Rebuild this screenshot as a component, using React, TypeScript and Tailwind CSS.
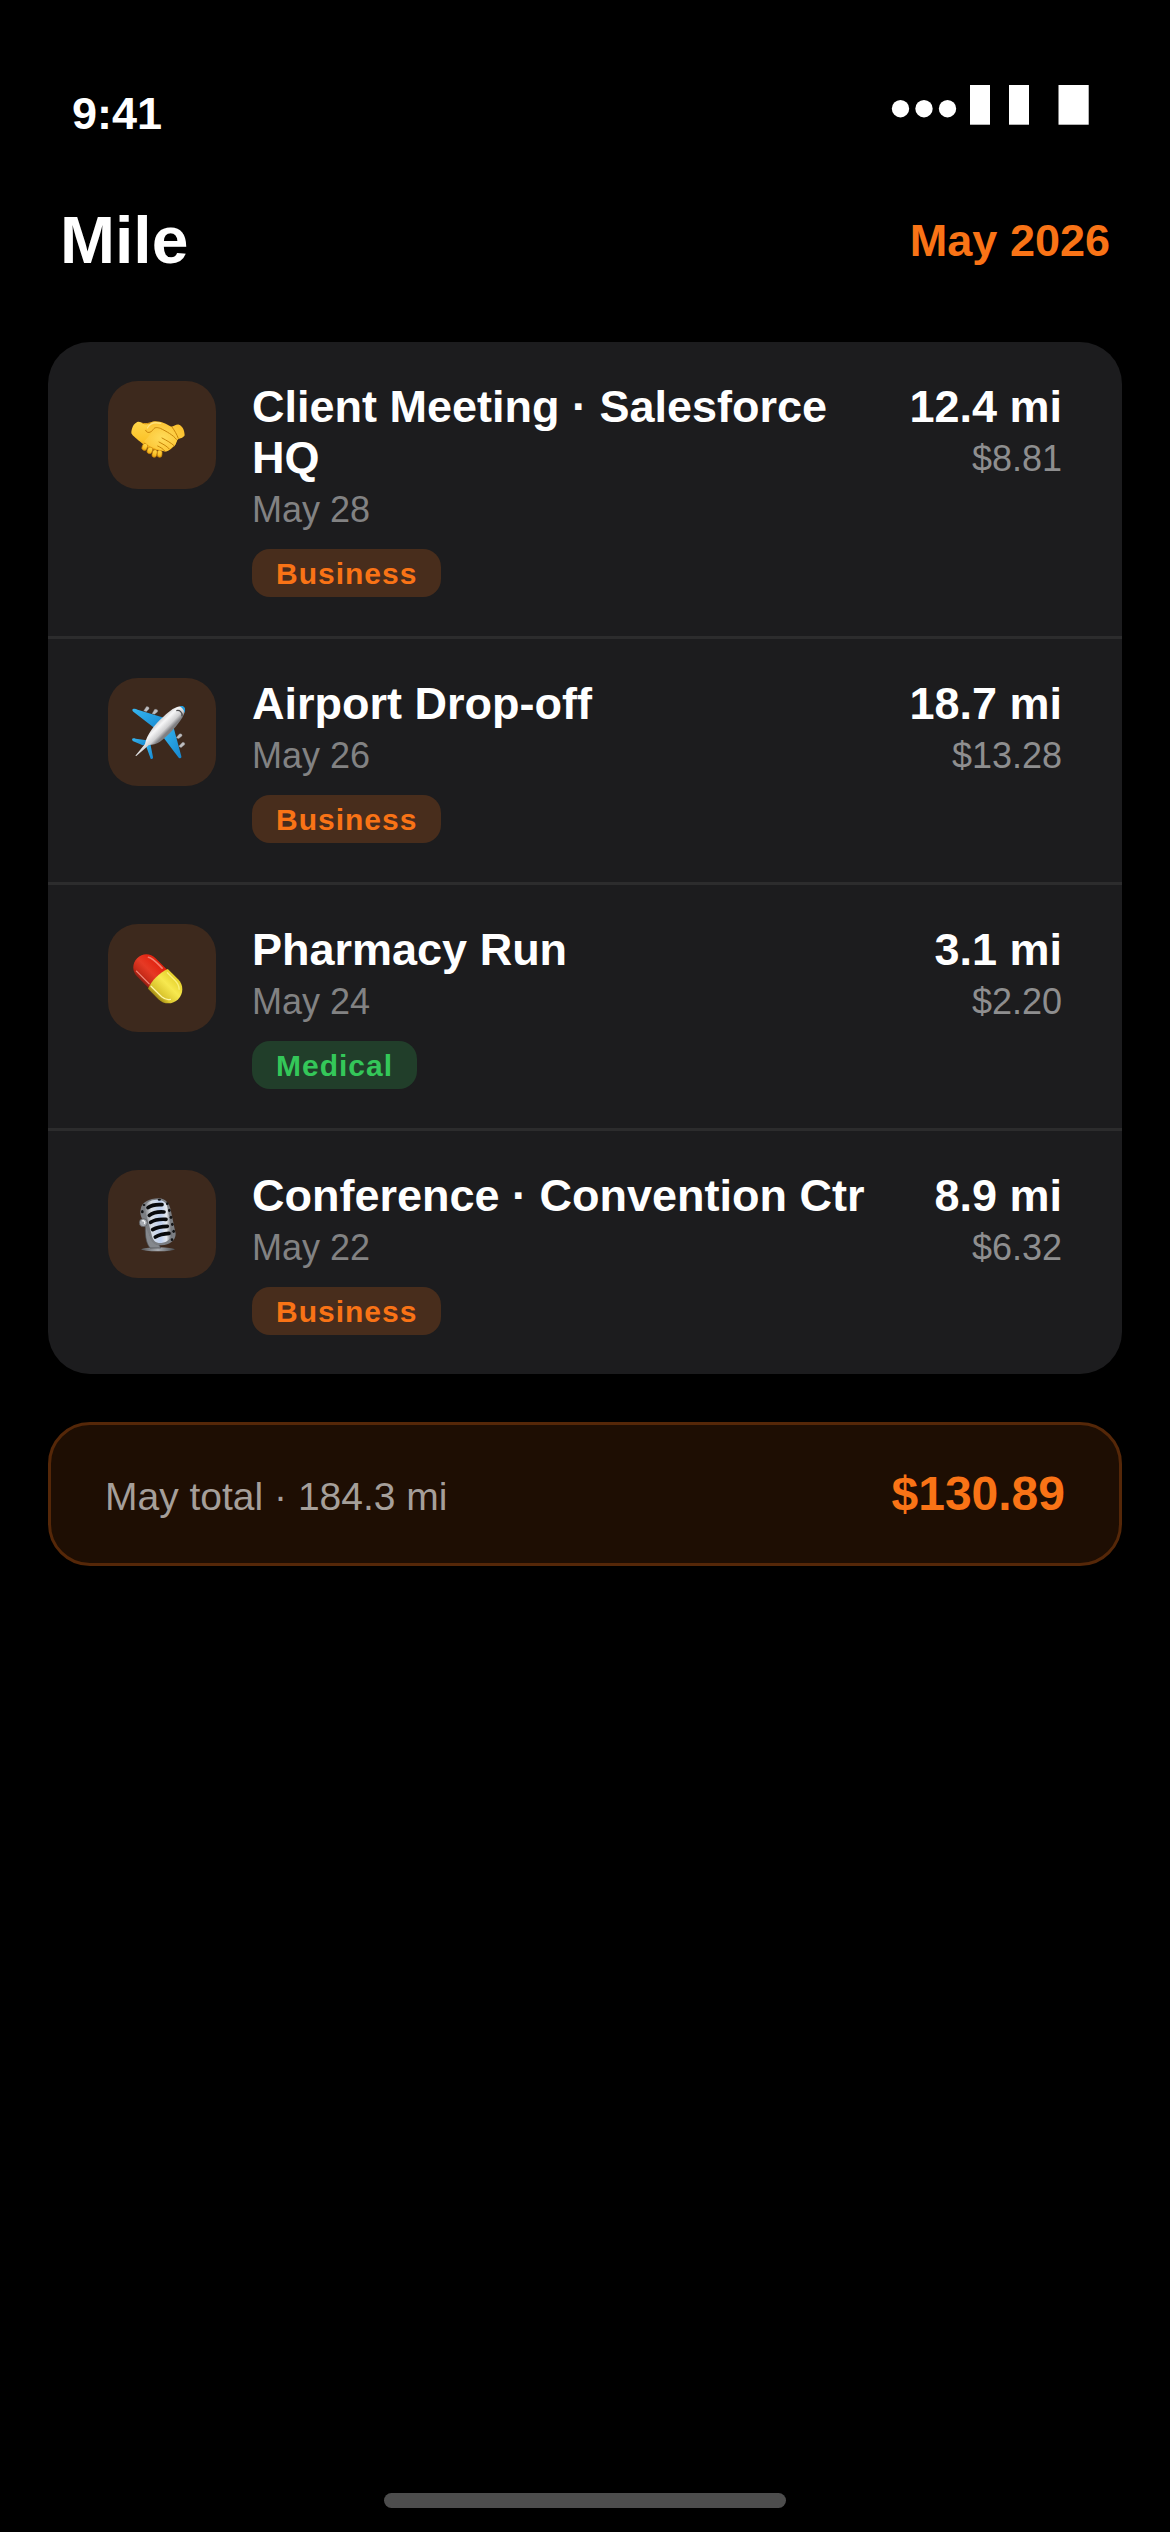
import React from "react";

function HandshakeIcon() {
    return (
        <svg viewBox="24 33 324 324" className="size-full" aria-hidden="true">
            <defs>
                <linearGradient id="hand" x1="0" y1="0" x2="0" y2="1">
                    <stop offset="0" stopColor="#ffd54a" />
                    <stop offset="0.6" stopColor="#fbc42b" />
                    <stop offset="1" stopColor="#e9a00f" />
                </linearGradient>
                <radialGradient id="palm" cx="0.45" cy="0.55" r="0.6">
                    <stop offset="0" stopColor="#ffdc5a" />
                    <stop offset="1" stopColor="#fbc02d" />
                </radialGradient>
            </defs>
            <path d="M94 190 C94 175 101 160 112 156 C120 154 126 160 128 159 C140 160 150 158 160 157 L212 172 L232 206 C230 222 214 240 198 244 L150 238 L126 220 C112 208 98 198 94 190Z" fill="url(#hand)" />
            <g fill="url(#hand)" stroke="#c98208" strokeWidth="2">
                <rect x="127" y="220" width="15" height="21" rx="7" transform="rotate(22 134 230)" />
                <rect x="142" y="231" width="15" height="20" rx="7" transform="rotate(22 149 241)" />
                <rect x="157" y="239" width="14" height="23" rx="7" transform="rotate(14 164 250)" />
                <rect x="172" y="240" width="14" height="22" rx="7" transform="rotate(4 179 251)" />
            </g>
            <path d="M136 182 C140 168 150 155 163 154 C184 153 198 162 214 170 C222 170 228 162 237 164 C247 168 254 180 254 196 C250 204 240 205 234 208 C228 214 230 222 224 227 C216 230 214 236 208 239 C200 246 190 246 184 241 C166 238 146 230 132 214 C142 206 148 194 156 186 C148 192 138 191 136 182Z" fill="url(#palm)" />
            <g fill="none" stroke="#c98609" strokeWidth="3" strokeLinecap="round">
                <path d="M128 160 C138 163 144 161 150 159" />
                <path d="M137 181 C140 191 153 189 160 178 C165 170 174 173 181 175 C199 184 221 196 229 208" />
                <path d="M186 204 C201 212 214 219 222 227" />
                <path d="M177 216 C190 223 202 229 208 237" />
                <path d="M173 228 C182 232 190 237 194 243" />
                <path d="M216 171 C224 182 231 194 235 205" />
            </g>
            <path d="M142 174 C150 159 166 156 182 160" fill="none" stroke="#ffe27a" strokeWidth="4" strokeLinecap="round" />
        </svg>
    );
}

function PlaneIcon() {
    return (
        <svg viewBox="24 24 324 324" className="size-full" aria-hidden="true">
            <defs>
                <linearGradient id="wing" x1="0" y1="0" x2="1" y2="1">
                    <stop offset="0" stopColor="#36b6f0" />
                    <stop offset="1" stopColor="#1687cf" />
                </linearGradient>
                <linearGradient id="fuselage" gradientUnits="userSpaceOnUse" x1="174" y1="150" x2="206" y2="182">
                    <stop offset="0" stopColor="#c9c9cb" />
                    <stop offset="0.35" stopColor="#f6f6f7" />
                    <stop offset="0.75" stopColor="#cfcfd1" />
                    <stop offset="1" stopColor="#7f7f82" />
                </linearGradient>
            </defs>
            <g fill="#bdbdbf" stroke="#77777a" strokeWidth="1">
                <path d="M131 122 L139 110 C145 109 149 113 147 117 L139 125Z" />
                <path d="M156 131 L164 118 C171 116 175 121 173 125 L164 133Z" />
                <path d="M228 203 L238 192 C244 189 248 194 246 198 L236 206Z" />
                <path d="M236 229 L246 218 C252 215 256 220 254 224 L243 233Z" />
            </g>
            <g fill="url(#wing)">
                <path d="M98 118 C102 115 108 117 113 119 L194 144 L166 176 L100 125 C97 122 96 120 98 118Z" />
                <path d="M221 173 L244 259 C245 264 241 267 236 263 L187 198Z" />
                <path d="M96 207 C98 204 103 205 107 206 L140 211 L140 224 L128 226 L98 213Z" />
                <path d="M139 230 L151 221 L159 261 C160 266 156 268 152 266Z" />
            </g>
            <path d="M106 257 L135 222 C141 192 163 164 190 140 C211 120 230 107 247 109 C257 113 257 126 248 141 C233 166 205 198 180 215 C169 222 158 224 147 225 L109 258Z" fill="url(#fuselage)" />
            <path d="M239 109 C250 105 259 113 254 129 C252 120 247 113 239 109Z" fill="#1b9ce0" />
            <path d="M229 122 C239 119 248 127 246 139" fill="none" stroke="#4c4c4f" strokeWidth="4" />
        </svg>
    );
}

function PillIcon() {
    return (
        <svg viewBox="24 27 324 324" className="size-full" aria-hidden="true">
            <defs>
                <linearGradient id="capRed" x1="0" y1="0" x2="0" y2="1">
                    <stop offset="0" stopColor="#e2200d" />
                    <stop offset="0.5" stopColor="#e63a25" />
                    <stop offset="0.85" stopColor="#c32917" />
                    <stop offset="1" stopColor="#8f1d12" />
                </linearGradient>
                <linearGradient id="capYellow" x1="0" y1="0" x2="0" y2="1">
                    <stop offset="0" stopColor="#e4cf2b" />
                    <stop offset="0.4" stopColor="#f7e84f" />
                    <stop offset="0.8" stopColor="#dcc62e" />
                    <stop offset="1" stopColor="#a08a14" />
                </linearGradient>
            </defs>
            <g transform="rotate(45 173 191)">
                <path d="M176 152 H125 C103 152 86 169 86 191 C86 213 103 230 125 230 H176Z" fill="url(#capRed)" />
                <path d="M174 149 H218 C242 149 260 168 260 191 C260 214 242 233 218 233 H174 C164 208 164 174 174 149Z" fill="url(#capYellow)" />
                <path d="M108 165 C118 158 135 159 160 159" fill="none" stroke="#f47d6c" strokeWidth="5" strokeLinecap="round" />
                <path d="M112 220 H166" fill="none" stroke="#f08a7b" strokeWidth="4" strokeLinecap="round" />
                <path d="M175 221 H220 C232 220 239 216 244 208" fill="none" stroke="#fff6a4" strokeWidth="4" strokeLinecap="round" />
                <path d="M181 158 H214 C226 158 234 161 241 168" fill="none" stroke="#fbf07a" strokeWidth="4" strokeLinecap="round" />
            </g>
        </svg>
    );
}

function MicIcon() {
    return (
        <svg viewBox="24 30 324 324" className="size-full" aria-hidden="true">
            <defs>
                <linearGradient id="micBody" x1="0" y1="0" x2="1" y2="0">
                    <stop offset="0" stopColor="#77797d" />
                    <stop offset="0.25" stopColor="#d9dee5" />
                    <stop offset="0.6" stopColor="#bfd0ee" />
                    <stop offset="0.8" stopColor="#e4e8ee" />
                    <stop offset="1" stopColor="#606266" />
                </linearGradient>
                <linearGradient id="micBase" x1="0" y1="0" x2="1" y2="0">
                    <stop offset="0" stopColor="#55575a" />
                    <stop offset="0.5" stopColor="#a8abb0" />
                    <stop offset="1" stopColor="#4a4c4f" />
                </linearGradient>
            </defs>
            <ellipse cx="174" cy="268" rx="50" ry="6" fill="url(#micBase)" />
            <path d="M136 192 C135 220 136 247 150 264 H182 L178 255 C157 252 147 228 146 196Z" fill="#85888d" stroke="#45474a" strokeWidth="2" />
            <path d="M122 148 C125 126 147 116 176 115 C197 116 208 130 212 149 L227 221 C227 240 210 255 184 256 C162 257 153 246 149 228 L126 176 C121 166 120 158 122 148Z" fill="#7b7e83" />
            <path d="M133 144 C137 126 154 118 173 119 C191 120 200 129 203 144 L216 219 C215 235 202 247 184 249 C167 250 158 241 155 224Z" fill="url(#micBody)" />
            <g fill="none" stroke="#08090b" strokeWidth="11" strokeLinecap="round">
                <path d="M144 143 C153 136 172 133 186 134" />
                <path d="M148 166 C158 158 177 155 192 156" />
                <path d="M152 187 C162 180 182 177 198 178" />
                <path d="M158 209 C168 203 186 199 202 199" />
                <path d="M166 231 C176 225 191 221 207 220" />
            </g>
            <g fill="#131416">
                <ellipse cx="127" cy="155" rx="4" ry="5" />
                <ellipse cx="132" cy="135" rx="4" ry="3" />
                <ellipse cx="178" cy="119" rx="5" ry="3" />
                <ellipse cx="202" cy="131" rx="4" ry="4" />
                <ellipse cx="208" cy="151" rx="4" ry="5" />
                <ellipse cx="213" cy="172" rx="4" ry="5" />
                <ellipse cx="217" cy="193" rx="4" ry="5" />
                <ellipse cx="221" cy="214" rx="4" ry="5" />
                <ellipse cx="216" cy="239" rx="4" ry="4" />
            </g>
            <circle cx="130" cy="188" r="12" fill="#a4a8ae" stroke="#4b4d50" strokeWidth="2" />
            <path d="M126 183 C132 180 137 186 133 192" fill="none" stroke="#f2f4f6" strokeWidth="4" />
        </svg>
    );
}

const trips = [
    {
        title: "Client Meeting · Salesforce HQ",
        date: "May 28",
        tag: "Business",
        miles: "12.4 mi",
        amount: "$8.81",
        icon: <HandshakeIcon />
    },
    {
        title: "Airport Drop-off",
        date: "May 26",
        tag: "Business",
        miles: "18.7 mi",
        amount: "$13.28",
        icon: <PlaneIcon />
    },
    {
        title: "Pharmacy Run",
        date: "May 24",
        tag: "Medical",
        miles: "3.1 mi",
        amount: "$2.20",
        icon: <PillIcon />
    },
    {
        title: "Conference · Convention Ctr",
        date: "May 22",
        tag: "Business",
        miles: "8.9 mi",
        amount: "$6.32",
        icon: <MicIcon />
    }
];

const tagColors: Record<string, string> = {
    Business: "bg-[#482d1c] text-[#f97316]",
    Medical: "bg-[#213e2a] text-[#34c759]"
};

function StatusBar() {
    return (
        <div className="flex items-start justify-between px-[72px] pt-[88px]">
            <span className="text-[45px] leading-[51px] font-bold">9:41</span>
            <svg viewBox="0 0 206 46" className="h-[46px] w-[206px] overflow-visible" fill="white" aria-hidden="true">
                <circle cx="8.5" cy="20.7" r="8.7" />
                <circle cx="32" cy="20.7" r="8.7" />
                <circle cx="55.5" cy="20.7" r="8.7" />
                <rect x="78" y="-3" width="20" height="39.7" />
                <rect x="117" y="-3" width="20" height="39.7" />
                <rect x="166.5" y="-3" width="30.2" height="39.7" />
            </svg>
        </div>
    );
}

export default function App() {
    return (
        <div className="flex min-h-screen flex-col bg-black font-['Liberation_Sans',Arial,sans-serif] text-white">
            <StatusBar />

            <header className="flex items-center justify-between px-[60px] py-16">
                <h1 className="text-[66px] leading-[75px] font-bold">Mile</h1>
                <button type="button" className="text-[45px] leading-[51px] font-bold text-[#f97316]">
                    May 2026
                </button>
            </header>

            <main className="flex flex-col gap-12 px-12">
                <ul className="divide-y-3 divide-[#2c2c2d] rounded-[42px] bg-[#1c1c1e]">
                    {trips.map((trip) => (
                        <li key={trip.title} className="flex items-start gap-9 px-[60px] py-[39px]">
                            <div className="size-[108px] shrink-0 rounded-[30px] bg-[#3d291d]">{trip.icon}</div>
                            <div className="min-w-0 flex-1">
                                <h2 className="text-[45px] leading-[51px] font-bold">{trip.title}</h2>
                                <p className="mt-1.5 text-[36px] leading-[42px] text-[#828283]">{trip.date}</p>
                                <span className={`mt-[18px] block w-fit rounded-[18px] px-6 pt-[7px] pb-[5px] text-[30px] leading-9 font-bold tracking-[1px] ${tagColors[trip.tag]}`}>
                                    {trip.tag}
                                </span>
                            </div>
                            <div className="shrink-0 text-right">
                                <p className="text-[45px] leading-[51px] font-bold">{trip.miles}</p>
                                <p className="mt-1.5 text-[36px] leading-[42px] text-[#8e8e8f]">{trip.amount}</p>
                            </div>
                        </li>
                    ))}
                </ul>

                <section className="flex items-baseline justify-between rounded-[42px] border-3 border-[#552708] bg-[#1e0e03] px-[54px] py-[42px]">
                    <span className="text-[39px] leading-[45px] text-[#a59f9a]">May total · 184.3 mi</span>
                    <span className="text-[48px] leading-[54px] font-bold text-[#f97316]">$130.89</span>
                </section>
            </main>

            <div className="mx-auto mt-auto mb-6 h-[15px] w-[402px] rounded-full bg-[#4d4d4d]" />
        </div>
    );
}
